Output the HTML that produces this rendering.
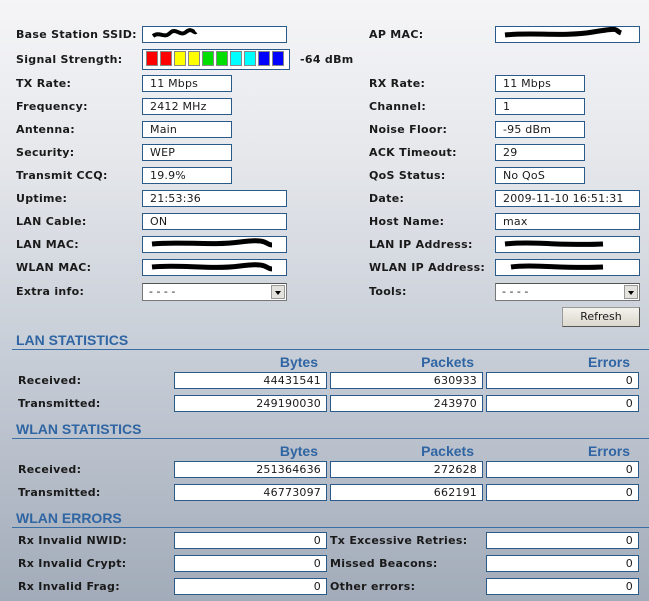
<!DOCTYPE html>
<html><head><meta charset="utf-8"><style>
*{margin:0;padding:0;box-sizing:border-box}
body{width:649px;height:601px;overflow:hidden;position:relative;background:linear-gradient(#f5f5f7 0px,#e6e8ec 150px,#c3cad4 380px,#a2abb9 601px);font-family:"DejaVu Sans","Liberation Sans",sans-serif;font-size:11px;color:#1a1a1a}
.l{position:absolute;font-weight:bold;white-space:nowrap;line-height:14px;letter-spacing:0.3px}
.b{position:absolute;background:#fff;border:1px solid #2a5a8a;height:17px;line-height:15px;padding:0 7px;white-space:nowrap;overflow:hidden;letter-spacing:0.2px}
.r{text-align:right;padding-right:5px}
.h{position:absolute;left:16px;font-family:"Liberation Sans",sans-serif;font-weight:bold;font-size:14px;color:#2f65a3}
.ln{position:absolute;left:12px;right:0;height:1px;background:#3a6ea5}
.c{position:absolute;font-family:"Liberation Sans",sans-serif;font-weight:bold;font-size:14px;color:#2f65a3;text-align:right}
.sel{position:absolute;background:#fff;border:1px solid #777;border-top-color:#555;height:18px;line-height:16px;padding-left:6px}
.sel i{position:absolute;right:1px;top:1px;width:14px;height:14px;background:#e4e2dc;border:1px solid #999}
.sel i:after{content:"";position:absolute;left:3px;top:5px;border:3px solid transparent;border-top:4px solid #000}
.sq{display:inline-block;width:12px;height:15px;margin-right:2px;border:1px solid #888;vertical-align:top;margin-top:1px}
</style></head><body>
<div class="l" style="left:16px;top:28px">Base Station SSID:</div>
<div class="b" style="left:142px;top:26px;width:145px"><svg width="60" height="14"><path d="M3 9 C10 4 14 12 20 6 S30 10 36 5 S44 7 46 5" stroke="#000" stroke-width="4" fill="none"/></svg></div>
<div class="l" style="left:16px;top:53px">Signal Strength:</div>
<div style="position:absolute;left:142px;top:49px;width:148px;height:21px;background:#fff;border:1px solid #2a5a8a;padding-left:3px">
<span class="sq" style="background:#f00"></span><span class="sq" style="background:#f00"></span><span class="sq" style="background:#ff0"></span><span class="sq" style="background:#ff0"></span><span class="sq" style="background:#0d0"></span><span class="sq" style="background:#0d0"></span><span class="sq" style="background:#0ff"></span><span class="sq" style="background:#0ff"></span><span class="sq" style="background:#00f"></span><span class="sq" style="background:#00f"></span></div>
<div class="l" style="left:300px;top:53px">-64 dBm</div>

<div class="l" style="left:16px;top:77px">TX Rate:</div><div class="b" style="left:142px;top:75px;width:90px">11 Mbps</div>
<div class="l" style="left:16px;top:100px">Frequency:</div><div class="b" style="left:142px;top:98px;width:90px">2412 MHz</div>
<div class="l" style="left:16px;top:123px">Antenna:</div><div class="b" style="left:142px;top:121px;width:90px">Main</div>
<div class="l" style="left:16px;top:146px">Security:</div><div class="b" style="left:142px;top:144px;width:90px">WEP</div>
<div class="l" style="left:16px;top:169px">Transmit CCQ:</div><div class="b" style="left:142px;top:167px;width:90px">19.9%</div>
<div class="l" style="left:16px;top:192px">Uptime:</div><div class="b" style="left:142px;top:190px;width:145px">21:53:36</div>
<div class="l" style="left:16px;top:215px">LAN Cable:</div><div class="b" style="left:142px;top:213px;width:145px">ON</div>
<div class="l" style="left:16px;top:238px">LAN MAC:</div><div class="b" style="left:142px;top:236px;width:145px"><svg width="125" height="14"><path d="M2 7 C30 4 60 9 90 5 S115 8 122 8" stroke="#000" stroke-width="5" fill="none"/></svg></div>
<div class="l" style="left:16px;top:261px">WLAN MAC:</div><div class="b" style="left:142px;top:259px;width:145px"><svg width="125" height="14"><path d="M2 7 C30 4 60 10 90 6 S115 9 122 9" stroke="#000" stroke-width="5" fill="none"/></svg></div>
<div class="l" style="left:16px;top:285px">Extra info:</div><div class="sel" style="left:142px;top:283px;width:145px">- - - -<i></i></div>

<div class="l" style="left:369px;top:28px">AP MAC:</div><div class="b" style="left:495px;top:26px;width:145px"><svg width="125" height="14"><path d="M2 8 C30 5 60 10 90 5 S110 3 118 6" stroke="#000" stroke-width="5" fill="none"/></svg></div>
<div class="l" style="left:369px;top:77px">RX Rate:</div><div class="b" style="left:495px;top:75px;width:90px">11 Mbps</div>
<div class="l" style="left:369px;top:100px">Channel:</div><div class="b" style="left:495px;top:98px;width:90px">1</div>
<div class="l" style="left:369px;top:123px">Noise Floor:</div><div class="b" style="left:495px;top:121px;width:90px">-95 dBm</div>
<div class="l" style="left:369px;top:146px">ACK Timeout:</div><div class="b" style="left:495px;top:144px;width:90px">29</div>
<div class="l" style="left:369px;top:169px">QoS Status:</div><div class="b" style="left:495px;top:167px;width:90px">No QoS</div>
<div class="l" style="left:369px;top:192px">Date:</div><div class="b" style="left:495px;top:190px;width:145px">2009-11-10 16:51:31</div>
<div class="l" style="left:369px;top:215px">Host Name:</div><div class="b" style="left:495px;top:213px;width:145px">max</div>
<div class="l" style="left:369px;top:238px">LAN IP Address:</div><div class="b" style="left:495px;top:236px;width:145px"><svg width="110" height="14"><path d="M2 7 C30 4 60 9 100 7" stroke="#000" stroke-width="5" fill="none"/></svg></div>
<div class="l" style="left:369px;top:261px">WLAN IP Address:</div><div class="b" style="left:495px;top:259px;width:145px"><svg width="110" height="14"><path d="M8 7 C30 4 60 9 100 7" stroke="#000" stroke-width="5" fill="none"/></svg></div>
<div class="l" style="left:369px;top:285px">Tools:</div><div class="sel" style="left:495px;top:283px;width:145px">- - - -<i></i></div>
<div style="position:absolute;left:562px;top:307px;width:78px;height:20px;background:linear-gradient(#f4f2ec,#dcd8ce);border:1px solid #9a9a9a;border-right-color:#555;border-bottom-color:#555;text-align:center;line-height:18px">Refresh</div>

<div class="h" style="top:332px">LAN STATISTICS</div><div class="ln" style="top:349px"></div>
<div class="c" style="left:218px;width:100px;top:354px">Bytes</div><div class="c" style="left:374px;width:100px;top:354px">Packets</div><div class="c" style="left:530px;width:100px;top:354px">Errors</div>
<div class="l" style="left:18px;top:374px">Received:</div>
<div class="b r" style="left:174px;top:372px;width:153px">44431541</div><div class="b r" style="left:330px;top:372px;width:153px">630933</div><div class="b r" style="left:486px;top:372px;width:153px">0</div>
<div class="l" style="left:18px;top:397px">Transmitted:</div>
<div class="b r" style="left:174px;top:395px;width:153px">249190030</div><div class="b r" style="left:330px;top:395px;width:153px">243970</div><div class="b r" style="left:486px;top:395px;width:153px">0</div>

<div class="h" style="top:421px">WLAN STATISTICS</div><div class="ln" style="top:438px"></div>
<div class="c" style="left:218px;width:100px;top:443px">Bytes</div><div class="c" style="left:374px;width:100px;top:443px">Packets</div><div class="c" style="left:530px;width:100px;top:443px">Errors</div>
<div class="l" style="left:18px;top:463px">Received:</div>
<div class="b r" style="left:174px;top:461px;width:153px">251364636</div><div class="b r" style="left:330px;top:461px;width:153px">272628</div><div class="b r" style="left:486px;top:461px;width:153px">0</div>
<div class="l" style="left:18px;top:486px">Transmitted:</div>
<div class="b r" style="left:174px;top:484px;width:153px">46773097</div><div class="b r" style="left:330px;top:484px;width:153px">662191</div><div class="b r" style="left:486px;top:484px;width:153px">0</div>

<div class="h" style="top:510px">WLAN ERRORS</div><div class="ln" style="top:527px"></div>
<div class="l" style="left:18px;top:534px">Rx Invalid NWID:</div><div class="b r" style="left:174px;top:532px;width:153px">0</div>
<div class="l" style="left:330px;top:534px">Tx Excessive Retries:</div><div class="b r" style="left:486px;top:532px;width:153px">0</div>
<div class="l" style="left:18px;top:557px">Rx Invalid Crypt:</div><div class="b r" style="left:174px;top:555px;width:153px">0</div>
<div class="l" style="left:330px;top:557px">Missed Beacons:</div><div class="b r" style="left:486px;top:555px;width:153px">0</div>
<div class="l" style="left:18px;top:580px">Rx Invalid Frag:</div><div class="b r" style="left:174px;top:578px;width:153px">0</div>
<div class="l" style="left:330px;top:580px">Other errors:</div><div class="b r" style="left:486px;top:578px;width:153px">0</div>
</body></html>
